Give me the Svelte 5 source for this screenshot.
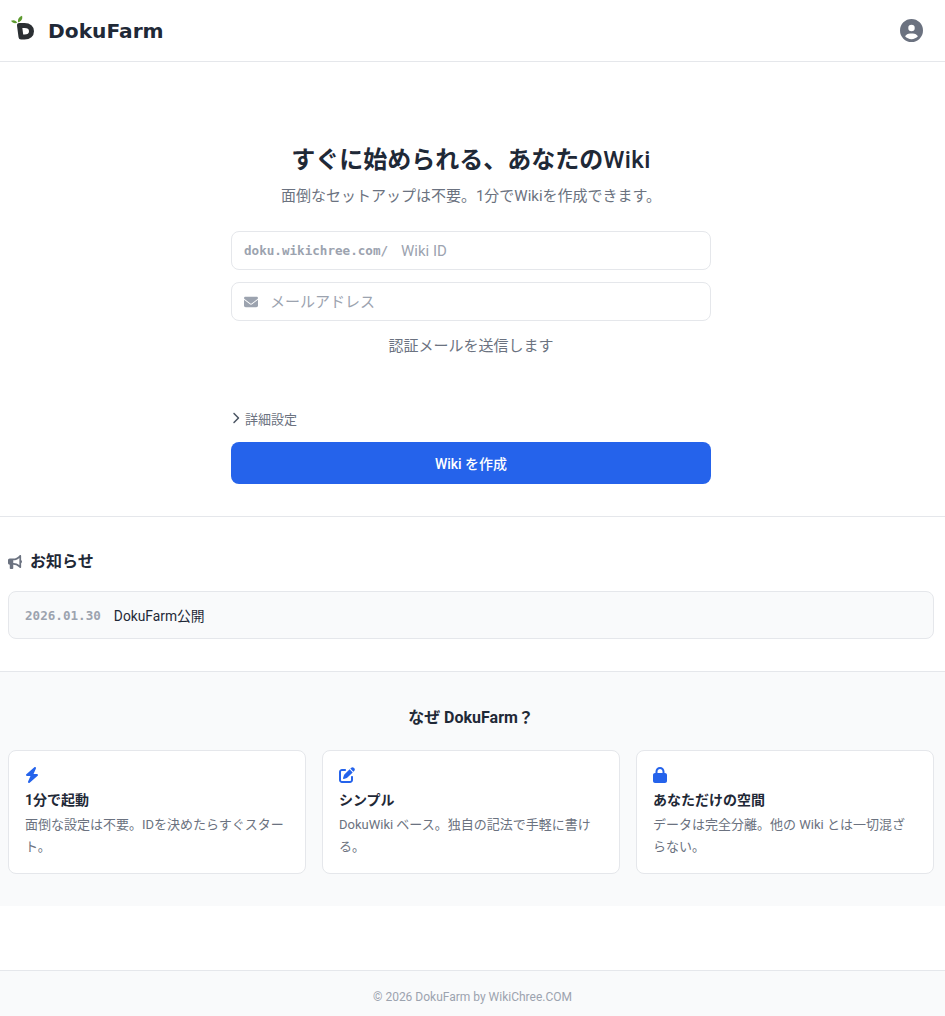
<script>
  let wikiId = $state('');
  let email = $state('');

  const features = [
    { icon: 'bolt', title: '1分で起動', text: '面倒な設定は不要。IDを決めたらすぐスタート。' },
    { icon: 'pen', title: 'シンプル', text: 'DokuWiki ベース。独自の記法で手軽に書ける。' },
    { icon: 'lock', title: 'あなただけの空間', text: 'データは完全分離。他の Wiki とは一切混ざらない。' }
  ];
</script>

<div class="page">
  <header class="topbar">
    <a class="brand" href="#top">
      <svg class="logo" viewBox="0 0 26 26" aria-hidden="true">
        <path d="M9.500 11.500h5c4.700 0 7 2.300 7 5.700s-2.300 5.800-7 5.800h-3.500z" fill="none" stroke="#2b2f33" stroke-width="5" stroke-linejoin="round"/>
        <path d="M7.200 8.800C6.200 6.400 3.500 5.400 1 6.800 2.300 9 4.800 9.900 7.200 8.800z" fill="#5d9a2e"/>
        <path d="M8 8.300C7.500 5.200 9 2.900 12 1.800 13 4.800 11.300 7.600 8 8.300z" fill="#5d9a2e"/>
      </svg>
      <span>DokuFarm</span>
    </a>
    <svg class="account" viewBox="0 0 512 512" aria-hidden="true">
      <path d="M399 384.200C376.900 345.800 335.400 320 288 320H224c-47.400 0-88.900 25.800-111 64.200c35.200 39.200 86.200 63.800 143 63.800s107.800-24.700 143-63.800zM0 256a256 256 0 1 1 512 0A256 256 0 1 1 0 256zm256 16a72 72 0 1 0 0-144 72 72 0 1 0 0 144z"/>
    </svg>
  </header>

  <main>
    <section class="hero">
      <h1>すぐに始められる、あなたの<span class="latin">Wiki</span></h1>
      <p class="lead">面倒なセットアップは不要。1分でWikiを作成できます。</p>

      <form class="signup" onsubmit={(e) => e.preventDefault()}>
        <label class="field">
          <span class="prefix">doku.wikichree.com/</span>
          <input type="text" placeholder="Wiki ID" bind:value={wikiId} />
        </label>
        <label class="field">
          <svg class="mail" viewBox="0 0 512 512" aria-hidden="true">
            <path d="M48 64C21.500 64 0 85.500 0 112c0 15.100 7.100 29.300 19.200 38.400L236.800 313.600c11.400 8.500 27 8.500 38.400 0L492.800 150.400c12.100-9.100 19.200-23.300 19.200-38.400c0-26.500-21.500-48-48-48H48zM0 176V384c0 35.300 28.700 64 64 64H448c35.300 0 64-28.700 64-64V176L294.400 339.200c-22.800 17.100-54 17.100-76.800 0L0 176z"/>
          </svg>
          <input type="email" placeholder="メールアドレス" bind:value={email} />
        </label>
        <p class="hint">認証メールを送信します</p>

        <button type="button" class="advanced">
          <svg viewBox="0 0 320 512" aria-hidden="true">
            <path d="M310.600 233.400c12.500 12.500 12.500 32.800 0 45.300l-192 192c-12.500 12.500-32.800 12.500-45.300 0s-12.500-32.800 0-45.300L242.700 256 73.400 86.600c-12.500-12.500-12.500-32.800 0-45.300s32.800-12.500 45.300 0l192 192z"/>
          </svg>
          詳細設定
        </button>
        <button type="submit" class="submit">Wiki を作成</button>
      </form>
    </section>

    <section class="news">
      <h2>
        <svg viewBox="0 0 512 512" aria-hidden="true">
          <path d="M480 32c0-12.900-7.800-24.600-19.800-29.600s-25.700-2.200-34.900 6.900L381.700 53c-48 48-113.100 75-181 75H192 160 64c-35.300 0-64 28.700-64 64v96c0 35.300 28.700 64 64 64l0 128c0 17.700 14.300 32 32 32h64c17.700 0 32-14.300 32-32V352h8.700c67.900 0 133 27 181 75l43.600 43.600c9.200 9.200 22.900 11.900 34.900 6.900s19.800-16.600 19.800-29.600V300.400c18.600-8.800 32-32.500 32-60.400s-13.400-51.600-32-60.400V32zm-64 76.700V240 371.300C357.200 317.800 280.500 288 200.700 288H192V192h8.700c79.800 0 156.500-29.800 215.300-83.300z"/>
        </svg>
        お知らせ
      </h2>
      <div class="news-item">
        <time datetime="2026-01-30">2026.01.30</time>
        <span>DokuFarm公開</span>
      </div>
    </section>

    <section class="why">
      <h2>なぜ DokuFarm？</h2>
      <div class="cards">
        {#each features as f}
          <article class="card">
            {#if f.icon === 'bolt'}
              <svg class="card-icon" viewBox="0 0 448 512" aria-hidden="true">
                <path d="M349.400 44.600c5.900-13.700 1.500-29.700-10.600-38.500s-28.600-8-39.900 1.800l-256 224c-10 8.800-13.600 22.900-8.900 35.300S50.700 288 64 288H175.500L98.600 467.400c-5.900 13.700-1.500 29.700 10.600 38.500s28.600 8 39.900-1.800l256-224c10-8.800 13.600-22.900 8.900-35.300s-16.600-20.700-30-20.700H272.500L349.400 44.600z"/>
              </svg>
            {:else if f.icon === 'pen'}
              <svg class="card-icon" viewBox="0 0 512 512" aria-hidden="true">
                <path d="M471.600 21.700c-21.900-21.900-57.300-21.900-79.200 0L362.300 51.700l97.900 97.900 30.100-30.100c21.900-21.900 21.900-57.300 0-79.200L471.600 21.700zm-299.200 220c-6.100 6.100-10.800 13.600-13.500 21.900l-29.600 88.800c-2.900 8.600-.6 18.100 5.800 24.600s15.900 8.700 24.600 5.800l88.800-29.600c8.200-2.700 15.700-7.400 21.900-13.500L437.700 172.300 339.700 74.300 172.400 241.700zM96 64C43 64 0 107 0 160V416c0 53 43 96 96 96H352c53 0 96-43 96-96V320c0-17.700-14.300-32-32-32s-32 14.300-32 32v96c0 17.700-14.300 32-32 32H96c-17.700 0-32-14.300-32-32V160c0-17.700 14.300-32 32-32h96c17.700 0 32-14.300 32-32s-14.300-32-32-32H96z"/>
              </svg>
            {:else}
              <svg class="card-icon" viewBox="0 0 448 512" aria-hidden="true">
                <path d="M144 144v48H304V144c0-44.200-35.800-80-80-80s-80 35.800-80 80zM80 192V144C80 64.500 144.500 0 224 0s144 64.500 144 144v48h16c35.300 0 64 28.700 64 64V448c0 35.300-28.700 64-64 64H64c-35.300 0-64-28.700-64-64V256c0-35.300 28.700-64 64-64H80z"/>
              </svg>
            {/if}
            <h3>{f.title}</h3>
            <p>{f.text}</p>
          </article>
        {/each}
      </div>
    </section>
  </main>

  <footer>© 2026 DokuFarm by WikiChree.COM</footer>
</div>

<style>
  :global(body) {
    margin: 0;
    background: #fff;
    color: #1f2937;
    font-family: Roboto, "Noto Sans CJK JP", sans-serif;
  }
  .page {
    min-height: 1016px;
    display: flex;
    flex-direction: column;
  }
  main {
    flex: 1;
  }

  .topbar {
    height: 61px;
    border-bottom: 1px solid #e5e7eb;
    display: flex;
    align-items: center;
    justify-content: space-between;
    padding: 0 22px 0 10px;
  }
  .brand {
    display: flex;
    align-items: center;
    gap: 12px;
    color: #1f2937;
    text-decoration: none;
    font-family: "DejaVu Sans", sans-serif;
    font-weight: 700;
    font-size: 20.200px;
  }
  .logo {
    width: 26px;
    height: 26px;
    margin-top: -7px;
  }
  .account {
    width: 23px;
    height: 23px;
    fill: #6b7280;
  }

  .hero {
    padding: 81px 3px 32px 0;
    border-bottom: 1px solid #e5e7eb;
    text-align: center;
  }
  h1 {
    margin: 0;
    font-size: 24px;
    line-height: 34px;
    font-weight: 700;
    color: #1f2937;
  }
  .latin {
    font-weight: 500;
    letter-spacing: 0.4px;
  }
  .lead {
    margin: 7px 0 0;
    font-size: 15px;
    line-height: 24px;
    color: #6b7280;
  }
  .signup {
    width: 480px;
    margin: 23px auto 0;
  }
  .field {
    height: 39px;
    box-sizing: border-box;
    display: flex;
    align-items: center;
    gap: 13px;
    padding: 0 12px;
    margin-bottom: 12px;
    border: 1px solid #e5e7eb;
    border-radius: 8px;
    background: #fff;
  }
  .prefix {
    font-family: "DejaVu Sans Mono", monospace;
    font-size: 12.600px;
    font-weight: 700;
    color: #9ca3af;
    white-space: nowrap;
  }
  .mail {
    width: 14px;
    height: 14px;
    margin-right: -1px;
    fill: #9ca3af;
    flex: none;
  }
  input {
    flex: 1;
    min-width: 0;
    border: 0;
    outline: 0;
    padding: 0;
    background: transparent;
    font: inherit;
    font-size: 15px;
    color: #1f2937;
  }
  input::placeholder {
    color: #9ca3af;
    opacity: 1;
  }
  .hint {
    margin: 13px 0 0;
    font-size: 15px;
    line-height: 24px;
    color: #6b7280;
  }
  .advanced {
    display: flex;
    align-items: center;
    gap: 5px;
    margin: 50px 0 0;
    padding: 0;
    height: 20px;
    border: 0;
    background: none;
    font: inherit;
    font-size: 13px;
    color: #6b7280;
  }
  .advanced svg {
    width: 9px;
    height: 12px;
    fill: #4b5563;
  }
  .submit {
    display: block;
    width: 100%;
    height: 42px;
    margin-top: 14px;
    border: 0;
    border-radius: 8px;
    background: #2563eb;
    color: #fff;
    font: inherit;
    font-size: 14px;
    font-weight: 500;
  }

  .news {
    padding: 32px 11px 32px 8px;
    border-bottom: 1px solid #e5e7eb;
  }
  .news h2 {
    display: flex;
    align-items: center;
    gap: 8px;
    margin: 0 0 16px;
    font-size: 16px;
    line-height: 26px;
    font-weight: 700;
    color: #1f2937;
  }
  .news h2 svg {
    width: 14px;
    height: 14px;
    fill: #6b7280;
  }
  .news-item {
    display: flex;
    align-items: center;
    gap: 13px;
    height: 48px;
    box-sizing: border-box;
    padding: 0 16px;
    border: 1px solid #e5e7eb;
    border-radius: 8px;
    background: #f9fafb;
    font-size: 13.800px;
  }
  time {
    font-family: "DejaVu Sans Mono", monospace;
    font-size: 12.600px;
    font-weight: 700;
    color: #9ca3af;
  }

  .why {
    padding: 33px 11px 32px 8px;
    background: #f9fafb;
  }
  .why h2 {
    margin: 0 0 19px;
    text-align: center;
    font-size: 16px;
    line-height: 26px;
    font-weight: 700;
    color: #1f2937;
  }
  .cards {
    display: grid;
    grid-template-columns: repeat(3, 1fr);
    gap: 16px;
  }
  .card {
    box-sizing: border-box;
    height: 124px;
    padding: 16px;
    border: 1px solid #e5e7eb;
    border-radius: 8px;
    background: #fff;
  }
  .card-icon {
    display: block;
    height: 16px;
    width: auto;
    fill: #2563eb;
  }
  .card h3 {
    margin: 6px 0 0;
    font-size: 14px;
    line-height: 22px;
    font-weight: 700;
    color: #1f2937;
  }
  .card p {
    margin: 3px 0 0;
    font-size: 13px;
    line-height: 22px;
    color: #6b7280;
  }

  footer {
    height: 28px;
    padding-top: 17px;
    border-top: 1px solid #e5e7eb;
    background: #f9fafb;
    text-align: center;
    font-size: 12px;
    line-height: 18px;
    color: #9ca3af;
  }
</style>
